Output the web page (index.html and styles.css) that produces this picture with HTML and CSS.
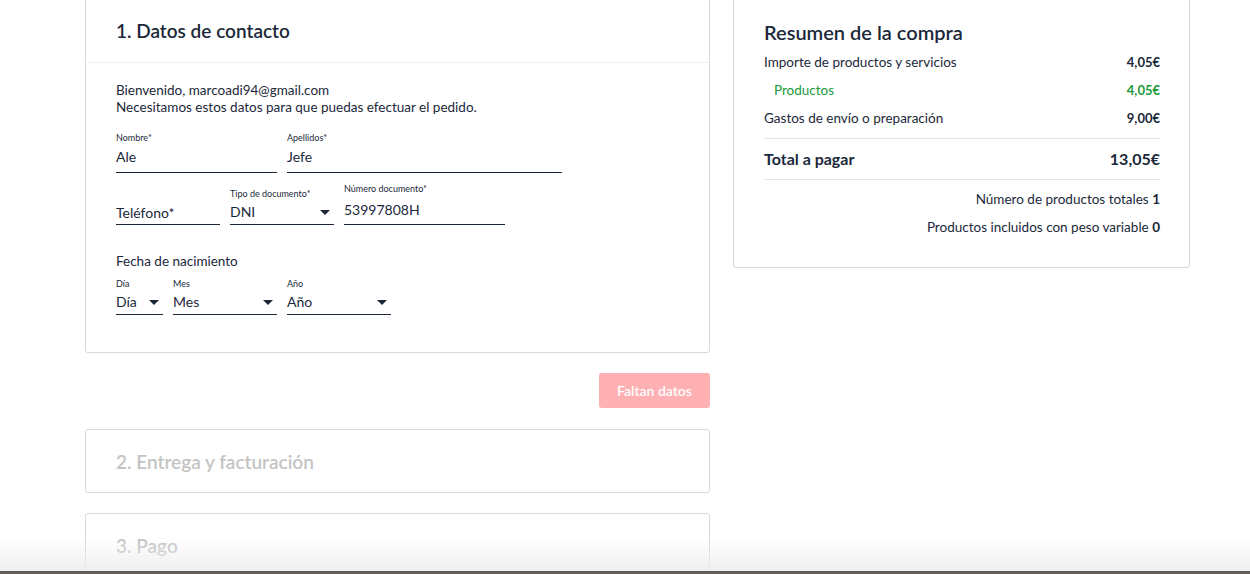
FILE: index.html
```html
<!DOCTYPE html>
<html lang="es">
<head>
<meta charset="utf-8">
<title>Checkout</title>
<link rel="stylesheet" href="styles.css">
</head>
<body>
<div class="page">
  <div class="main">
    <section class="card card-contact">
      <header class="card-head"><h2 class="card-title">1. Datos de contacto</h2></header>
      <div class="card-body">
        <p class="intro">Bienvenido, marcoadi94@gmail.com<br>Necesitamos estos datos para que puedas efectuar el pedido.</p>
        <div class="row row-1">
          <div class="field f-nombre"><span class="label">Nombre*</span><span class="value">Ale</span></div>
          <div class="field f-apellidos"><span class="label">Apellidos*</span><span class="value">Jefe</span></div>
        </div>
        <div class="row row-2">
          <div class="field f-tel"><span class="value placeholder">Teléfono*</span></div>
          <div class="field f-tipo"><span class="label">Tipo de documento*</span><span class="value select">DNI<i class="caret"></i></span></div>
          <div class="field f-num"><span class="label">Número documento*</span><span class="value">53997808H</span></div>
        </div>
        <p class="group-title">Fecha de nacimiento</p>
        <div class="row row-3">
          <div class="field f-dia"><span class="label">Día</span><span class="value select">Día<i class="caret"></i></span></div>
          <div class="field f-mes"><span class="label">Mes</span><span class="value select">Mes<i class="caret"></i></span></div>
          <div class="field f-ano"><span class="label">Año</span><span class="value select">Año<i class="caret"></i></span></div>
        </div>
      </div>
    </section>
    <div class="actions"><button class="btn-missing" type="button">Faltan datos</button></div>
    <section class="card card-step"><h2 class="card-title muted">2. Entrega y facturación</h2></section>
    <section class="card card-step"><h2 class="card-title muted">3. Pago</h2></section>
  </div>
  <aside class="summary">
    <h2 class="summary-title">Resumen de la compra</h2>
    <div class="line"><span>Importe de productos y servicios</span><b>4,05€</b></div>
    <div class="line sub"><span>Productos</span><b>4,05€</b></div>
    <div class="line"><span>Gastos de envío o preparación</span><b>9,00€</b></div>
    <div class="line total"><span>Total a pagar</span><b>13,05€</b></div>
    <div class="meta meta-first">Número de productos totales <b>1</b></div>
    <div class="meta">Productos incluidos con peso variable <b>0</b></div>
  </aside>
</div>
<div class="bottom-fade"></div>
</body>
</html>
```

FILE: styles.css
```css
* { box-sizing: border-box; }
html, body { margin: 0; padding: 0; height: 100%; overflow: hidden; }
body {
  font-family: "Source Sans Pro", Lato, "Liberation Sans", sans-serif;
  color: #1b283a;
  background: #fff;
}
.page {
  display: flex;
  gap: 23px;
  padding-left: 85px;
  align-items: flex-start;
}
.main { width: 625px; display: flex; flex-direction: column; }
.card {
  border: 1px solid #d9d9d9;
  border-radius: 3px;
  background: #fff;
}
.card-contact { margin-top: -4px; }
.card-head {
  height: 66px;
  padding: 22px 30px 0;
  border-bottom: 1px solid #f1f1f1;
}
.card-title {
  margin: 0;
  font-size: 19px;
  font-weight: 600;
  line-height: 24px;
  color: #1b283a;
}
.card-title.muted { color: #c4c4c4; }
.card-body { padding: 19px 30px 37px; }
.intro {
  margin: 0;
  font-size: 13.5px;
  line-height: 17px;
}
.row { display: flex; gap: 10px; }
.row-1 { margin-top: 16px; }
.row-2 { margin-top: 10px; align-items: flex-end; }
.row-3 { margin-top: 8px; }
.field {
  display: flex;
  flex-direction: column;
  border-bottom: 1px solid #1b283a;
}
.label { font-size: 9px; line-height: 12px; color: #1b283a; }
.value {
  font-size: 14px;
  line-height: 18px;
  padding: 4px 0 6px;
  position: relative;
}
.placeholder { padding: 9px 0 2px; }
.value.select { padding: 3px 18px 3px 0; }
.f-num .value { padding: 6px 0 5px; }
.caret {
  position: absolute;
  right: 4px;
  top: 10px;
  width: 0; height: 0;
  border-left: 5px solid transparent;
  border-right: 5px solid transparent;
  border-top: 5px solid #1b283a;
}
.f-nombre { width: 161px; }
.f-apellidos { width: 275px; }
.f-tel { width: 104px; }
.f-tipo { width: 104px; }
.f-num { width: 161px; }
.f-dia { width: 47px; }
.f-mes { width: 104px; }
.f-ano { width: 104px; }
.group-title {
  margin: 28px 0 0;
  font-size: 13.5px;
  line-height: 17px;
}
.actions {
  display: flex;
  justify-content: flex-end;
  padding: 20px 0 21px;
}
.btn-missing {
  width: 111px;
  height: 35px;
  border: 0;
  border-radius: 3px;
  background: #ffb0b3;
  color: #fff;
  font-family: inherit;
  font-size: 14px;
  font-weight: 600;
}
.card-step {
  height: 64px;
  padding: 20px 30px 0;
  margin-bottom: 20px;
}
.summary {
  width: 457px;
  margin-top: -4px;
  border: 1px solid #d9d9d9;
  border-radius: 3px;
  padding: 22px 29px 26px 30px;
}
.summary-title {
  margin: 0 0 3px;
  font-size: 20px;
  font-weight: 600;
  line-height: 26px;
}
.line {
  display: flex;
  justify-content: space-between;
  align-items: baseline;
  font-size: 13.5px;
  line-height: 28px;
}
.line b { font-weight: 700; font-size: 13px; }
.line.sub { color: #1a9a3a; padding-left: 10px; }
.line.total {
  font-size: 16px;
  font-weight: 700;
  border-top: 1px solid #e5e5e5;
  border-bottom: 1px solid #e5e5e5;
  margin-top: 6px;
  height: 42px;
  align-items: center;
}
.line.total b { font-size: 16px; }
.meta {
  text-align: right;
  font-size: 13.5px;
  line-height: 28px;
}
.meta-first { margin-top: 5px; }
.bottom-fade {
  position: fixed;
  left: 0; right: 0; bottom: 0;
  height: 36px;
  background: linear-gradient(to bottom, rgba(240,240,240,0), rgba(238,238,238,0.95) 92%, #5a5650 92%, #6b655d);
  pointer-events: none;
}
```
